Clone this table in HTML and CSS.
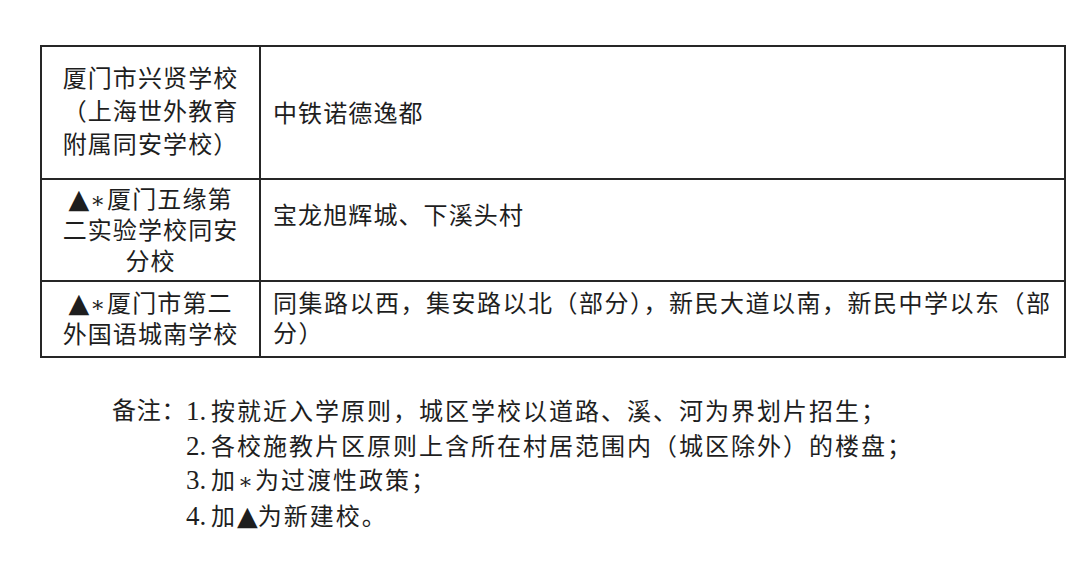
FILE: index.html
```html
<!DOCTYPE html>
<html lang="zh-CN">
<head>
<meta charset="utf-8">
<link rel="stylesheet" href="styles.css">
</head>
<body>
<table class="grid">
  <tr class="r1">
    <td class="school">厦门市兴贤学校<br>（上海世外教育<br>附属同安学校）</td>
    <td class="area">中铁诺德逸都</td>
  </tr>
  <tr class="r2">
    <td class="school"><span class="tri">▲</span><span class="star">∗</span>厦门五缘第<br>二实验学校同安<br>分校</td>
    <td class="area area-top">宝龙旭辉城、下溪头村</td>
  </tr>
  <tr class="r3">
    <td class="school"><span class="tri">▲</span><span class="star">∗</span>厦门市第二<br>外国语城南学校</td>
    <td class="area">同集路以西，集安路以北（部分），新民大道以南，新民中学以东（部分）</td>
  </tr>
</table>
<div class="notes">
  <div class="label">备注：</div>
  <div class="items">
    <div class="item"><span class="num">1.</span>按就近入学原则，城区学校以道路、溪、河为界划片招生；</div>
    <div class="item"><span class="num">2.</span>各校施教片区原则上含所在村居范围内（城区除外）的楼盘；</div>
    <div class="item"><span class="num">3.</span>加<span class="star">∗</span>为过渡性政策；</div>
    <div class="item"><span class="num">4.</span>加<span class="tri">▲</span>为新建校。</div>
  </div>
</div>
</body>
</html>
```

FILE: styles.css
```css
html, body {
  margin: 0;
  padding: 0;
  background: #ffffff;
}
body {
  font-family: "Liberation Serif", "Noto Sans CJK SC", serif;
  color: #1e1e1e;
  font-size: 24px;
}
.grid {
  border-collapse: collapse;
  margin: 45px 0 0 40px;
  width: 1026px;
  table-layout: fixed;
}
.grid td {
  border: 2px solid #262626;
  padding: 0;
  letter-spacing: 1.1px;
}
.school {
  width: 217px;
  text-align: center;
  vertical-align: middle;
}
.r1 .school { line-height: 33px; height: 131px; }
.r2 .school { line-height: 31px; height: 100px; }
.r3 .school { line-height: 30px; height: 74px; }
.area {
  vertical-align: middle;
  padding-left: 12px !important;
  line-height: 30px;
  padding-right: 6px !important;
}
.r3 .area { letter-spacing: 1.5px; }
.r1 .area { padding-top: 2px !important; }
.area-top {
  vertical-align: top;
  padding-top: 21px !important;
}
.tri {
  font-family: "DejaVu Sans", sans-serif;
  font-size: 27px;
  letter-spacing: 0;
}
.star {
  font-family: "DejaVu Serif", serif;
  font-size: 22px;
  letter-spacing: 0;
  margin: 0 2px 0 1px;
}
.notes {
  display: flex;
  margin: 37px 0 0 112px;
  line-height: 33.5px;
}
.label {
  letter-spacing: 0.7px;
  width: 74px;
  flex: none;
  white-space: nowrap;
}
.items {
  display: flex;
  flex-direction: column;
  letter-spacing: 2px;
  white-space: nowrap;
}
.num {
  display: inline-block;
  width: 25px;
  font-size: 27px;
  letter-spacing: 0;
}
```
